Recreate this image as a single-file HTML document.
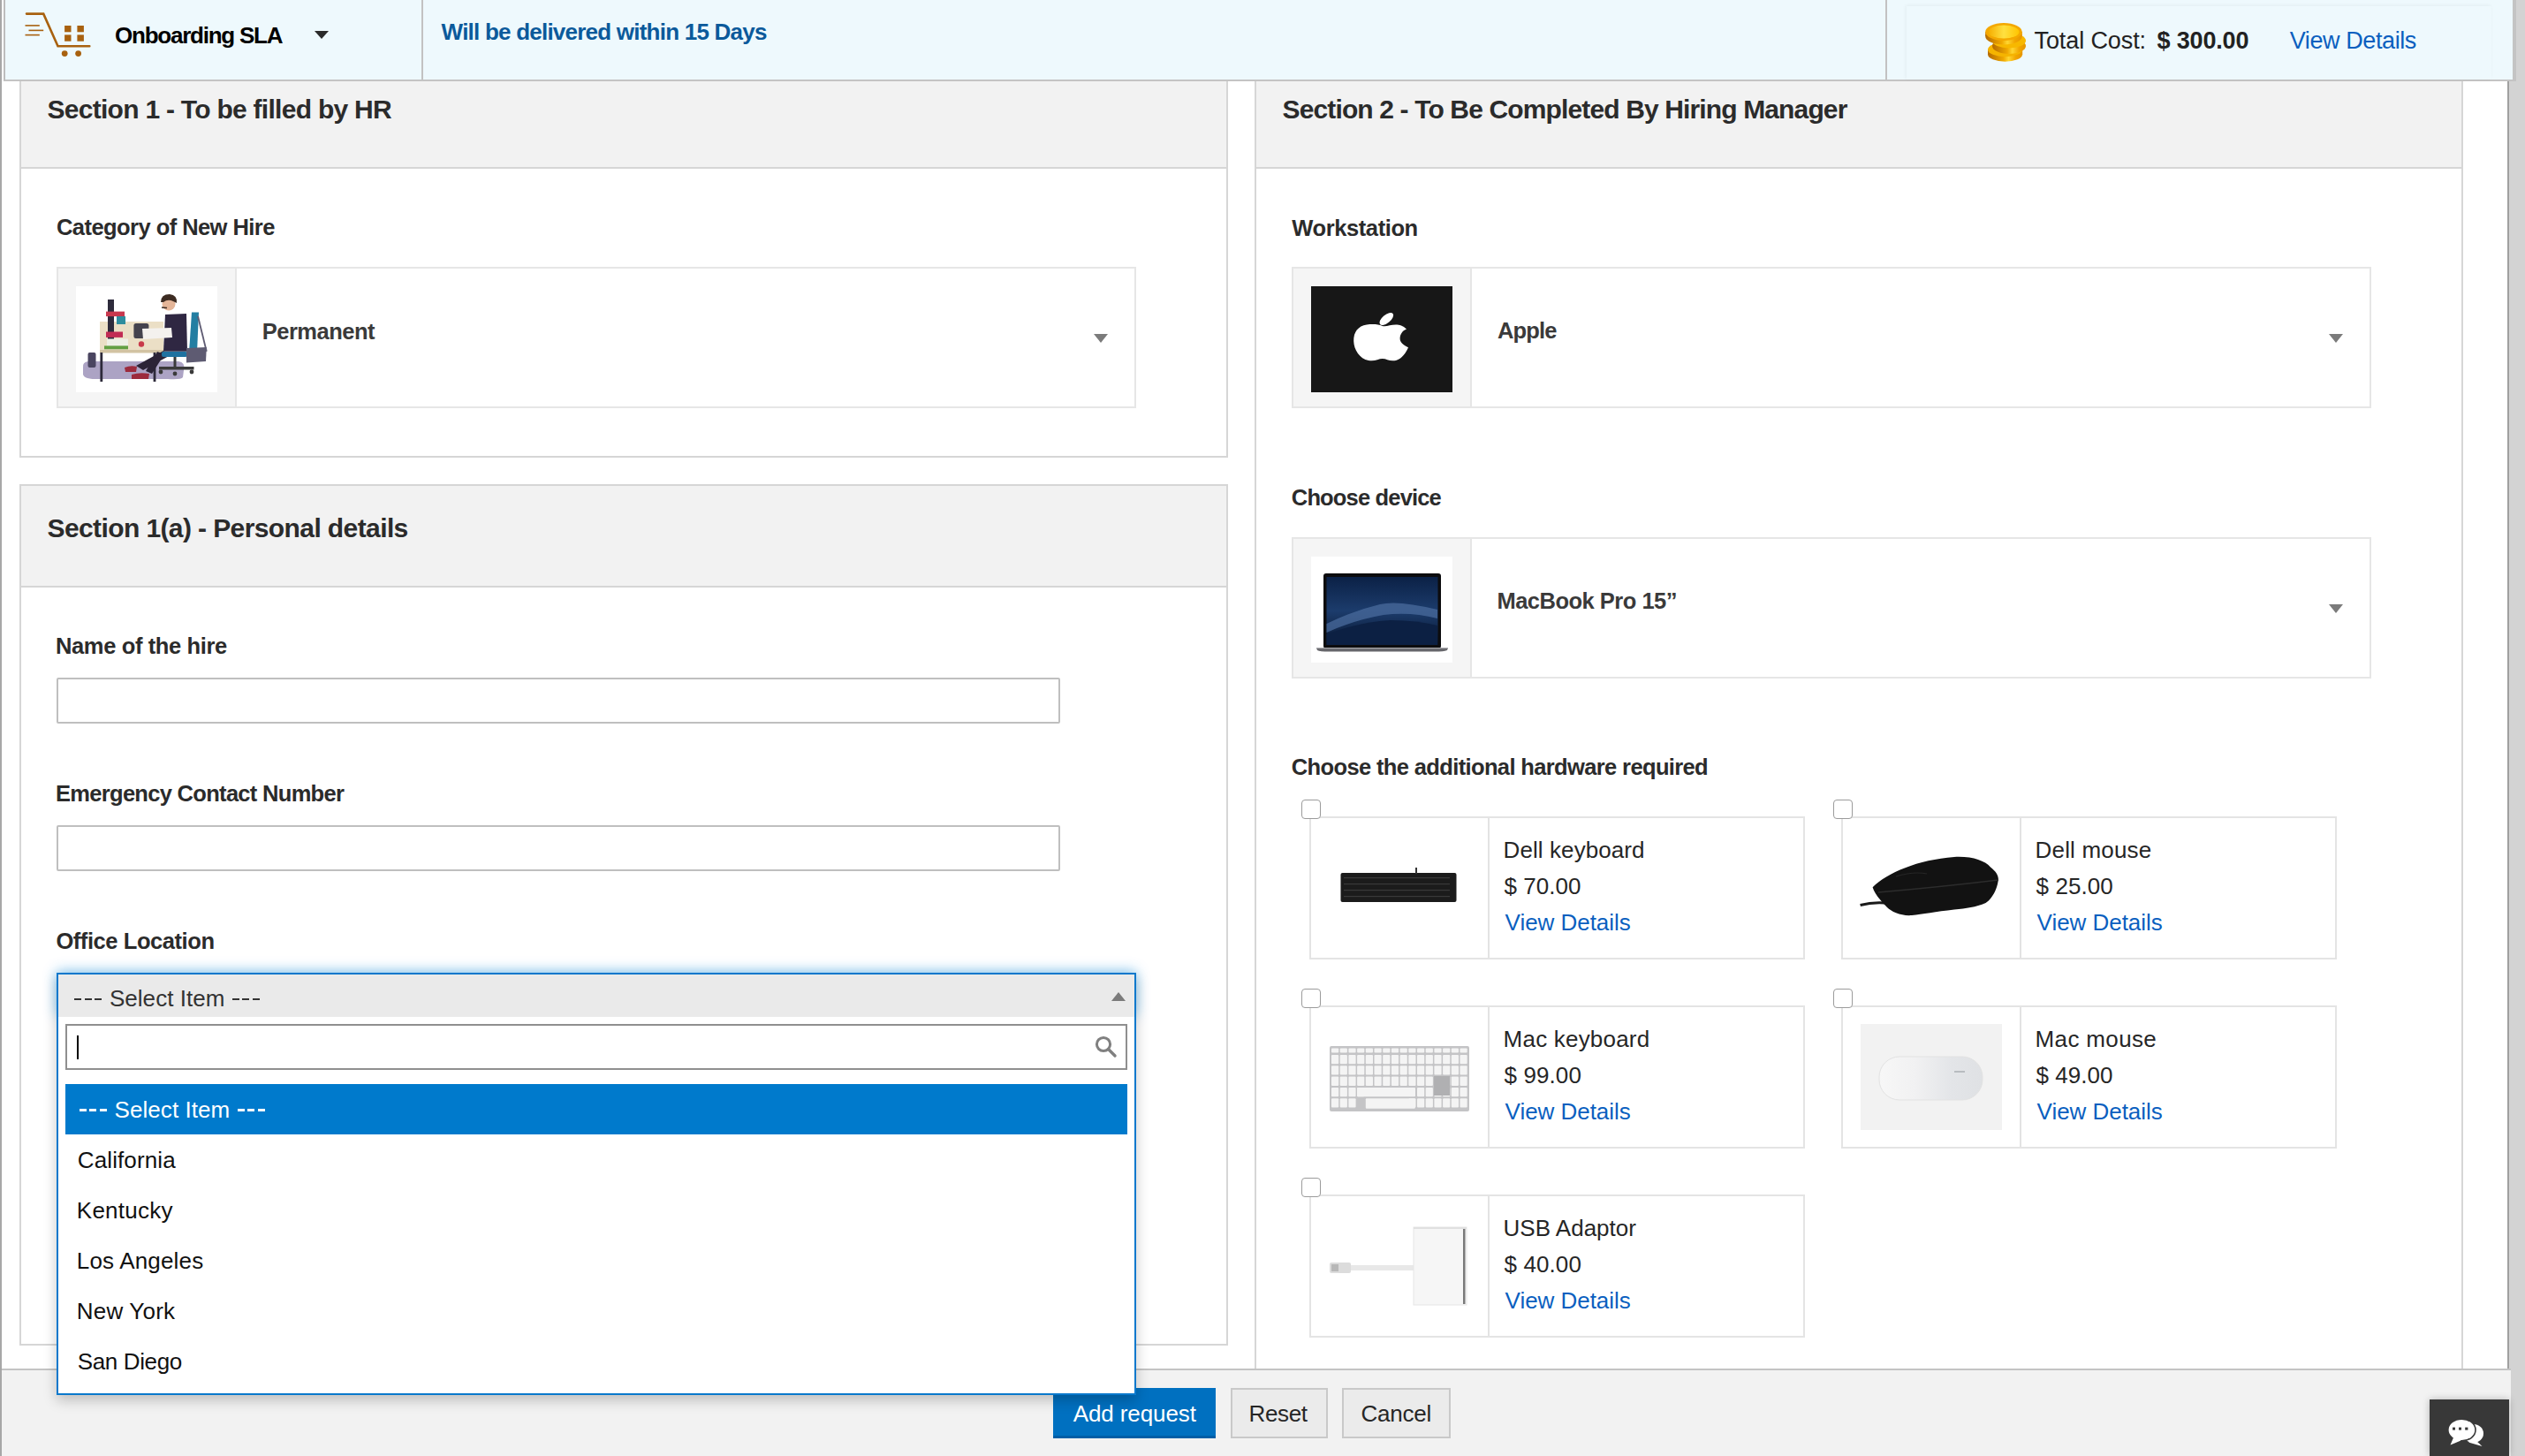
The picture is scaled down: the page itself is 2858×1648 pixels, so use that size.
<!DOCTYPE html>
<html><head><meta charset="utf-8"><title>Onboarding</title>
<style>
html,body{margin:0;padding:0;background:#fff;}
body{width:2858px;height:1648px;position:relative;overflow:hidden;font-family:"Liberation Sans", sans-serif;}
div{box-sizing:content-box;}
</style></head><body>
<div style="position:absolute;left:0px;top:0px;width:2px;height:1648px;background:#a7a7a7"></div>
<div style="position:absolute;left:2838px;top:0px;width:2px;height:1648px;background:#a0a0a0"></div>
<div style="position:absolute;left:2840px;top:0px;width:18px;height:1648px;background:#d3d3d3"></div>
<div style="position:absolute;left:22px;top:74px;width:1364px;height:440px;border:2px solid #d6d6d6;background:#fff"></div>
<div style="position:absolute;left:24px;top:76px;width:1364px;height:113px;background:#f2f2f2;border-bottom:2px solid #d6d6d6"></div>
<div style="position:absolute;left:22px;top:548px;width:1364px;height:971px;border:2px solid #d6d6d6;background:#fff"></div>
<div style="position:absolute;left:24px;top:550px;width:1364px;height:113px;background:#f2f2f2;border-bottom:2px solid #d6d6d6"></div>
<div style="position:absolute;left:1420px;top:74px;width:1364px;height:1496px;border:2px solid #d6d6d6;background:#fff"></div>
<div style="position:absolute;left:1422px;top:76px;width:1364px;height:113px;background:#f2f2f2;border-bottom:2px solid #d6d6d6"></div>
<div style="position:absolute;left:64px;top:302px;width:1218px;height:156px;border:2px solid #e6e6e6;background:#fff"></div>
<div style="position:absolute;left:66px;top:304px;width:200px;height:156px;background:#f5f5f5;border-right:2px solid #e6e6e6"></div>
<div style="position:absolute;left:86px;top:324px;width:160px;height:120px;overflow:hidden"><svg width="160" height="120" viewBox="0 0 160 120">
<rect width="160" height="120" fill="#fff"/>
<path d="M8,92 Q7,86 14,85 L116,85 Q124,86 122,95 L121,103 Q119,106 104,105 L22,105 Q7,105 8,98 Z" fill="#aca3c4"/>
<rect x="13.5" y="75" width="9" height="17" rx="2" fill="#4a4560"/>
<rect x="27" y="40" width="72" height="35" fill="#ebdfc6"/>
<rect x="27" y="72" width="72" height="3.5" fill="#d2c3a3"/>
<rect x="27.4" y="75" width="2.8" height="33" fill="#2d2a3a"/>
<rect x="87.6" y="75" width="2.8" height="33" fill="#2d2a3a"/>
<rect x="36" y="15" width="7" height="46" fill="#2e2b3c"/>
<rect x="34" y="28.6" width="21" height="5.5" fill="#c8384e"/>
<rect x="46" y="34" width="10" height="9" fill="#2f8d9e"/>
<rect x="34" y="51.5" width="19" height="6.4" fill="#c12c54"/>
<rect x="35" y="59.5" width="24" height="9" fill="#eef0e6"/>
<rect x="32" y="67.4" width="27" height="3.9" fill="#63a043"/>
<rect x="65.4" y="42" width="17" height="17" rx="2.5" fill="#45434e"/>
<circle cx="74" cy="65.5" r="3.2" fill="#c83a4a"/>
<path d="M101,32 L125,31 L126,73.7 L99,73.7 Z" fill="#2f2742"/>
<path d="M75,48 L108,47 L109,58 L76,60 Z" fill="#f4f1ee"/>
<path d="M99,73 L105,79 L76,95 L68,90 Z" fill="#2b2336"/>
<path d="M100,77 L86,99 L79,96 L92,74 Z" fill="#2b2336"/>
<path d="M55,92 Q62,89 69,91 L68,97 L56,97 Z" fill="#9c2b3d"/>
<path d="M63,100 Q72,97 83,99 L82,105 L63,105 Z" fill="#9c2b3d"/>
<circle cx="105" cy="20" r="7.5" fill="#e4b598"/>
<path d="M96,18 Q96,9 106,9 Q115,10 114,19 L110,17 Q104,14 99,18 Z" fill="#3d2c22"/>
<path d="M97,24 L103,24.5" stroke="#3d2c22" stroke-width="1.6"/>
<path d="M131,29.4 L139,29.4 L137,75 L128,75 Z" fill="#237ea2"/>
<rect x="97" y="74" width="29" height="6" rx="2" fill="#1f72a0"/>
<rect x="110.5" y="80" width="3" height="11" fill="#3a3a3a"/>
<path d="M94,91 L133.5,91 L133.5,94.5 L94,94.5 Z" fill="#3a3a3a"/>
<circle cx="96" cy="97" r="2.4" fill="#3a3a3a"/><circle cx="112" cy="99" r="2.4" fill="#3a3a3a"/><circle cx="131" cy="97" r="2.4" fill="#3a3a3a"/>
<path d="M125,70 L147.8,69 L147,85 L125,86.4 Z" fill="#5e5b72"/>
<path d="M138,34 L147.8,73.7" stroke="#5e5b72" stroke-width="1.8"/>
</svg></div>
<div style="position:absolute;left:1238px;top:378px;width:0;height:0;border-left:8px solid transparent;border-right:8px solid transparent;border-top:10px solid #7b7b7b"></div>
<div style="position:absolute;left:1462px;top:302px;width:1218px;height:156px;border:2px solid #e6e6e6;background:#fff"></div>
<div style="position:absolute;left:1464px;top:304px;width:200px;height:156px;background:#f5f5f5;border-right:2px solid #e6e6e6"></div>
<div style="position:absolute;left:1484px;top:324px;width:160px;height:120px;overflow:hidden"><svg width="160" height="120" viewBox="0 0 160 120">
<rect width="160" height="120" fill="#171717"/>
<path d="M80.8,45 C76,43 70,42.5 63,43.5 C53,45 48,52 48.2,62 C48.5,72 55,82 65,84 C72,85.5 76,82 80.8,82 C85.5,82 89,85.5 96,84 C103,82 107.5,75 110,69.2 C103,66 100.6,62 100.6,59.4 C100.6,54 104,50 108,48.6 C104,44.5 100,43.5 96,43.5 C90,43.5 85,46 80.8,45 Z" fill="#fff"/>
<ellipse cx="85.3" cy="37" rx="9.5" ry="4.6" transform="rotate(-40 85.3 37)" fill="#fff"/>
</svg></div>
<div style="position:absolute;left:2636px;top:378px;width:0;height:0;border-left:8px solid transparent;border-right:8px solid transparent;border-top:10px solid #7b7b7b"></div>
<div style="position:absolute;left:1462px;top:608px;width:1218px;height:156px;border:2px solid #e6e6e6;background:#fff"></div>
<div style="position:absolute;left:1464px;top:610px;width:200px;height:156px;background:#f5f5f5;border-right:2px solid #e6e6e6"></div>
<div style="position:absolute;left:1484px;top:630px;width:160px;height:120px;overflow:hidden"><svg width="160" height="120" viewBox="0 0 160 120">
<defs><linearGradient id="scr" x1="0" y1="0" x2="0" y2="1"><stop offset="0" stop-color="#0b2146"/><stop offset="0.5" stop-color="#1c3c6c"/><stop offset="1" stop-color="#081630"/></linearGradient></defs>
<rect width="160" height="120" fill="#fff"/>
<rect x="14" y="19" width="133" height="85" rx="3" fill="#0c0c0e"/>
<rect x="17.5" y="23" width="126" height="77" fill="url(#scr)"/>
<path d="M17.5,76 Q45,62 78,54 Q98,49 143,60 L143,70 Q112,62 82,66 Q48,72 17.5,86 Z" fill="#4a6b9c" opacity="0.75"/>
<path d="M17.5,88 Q55,74 90,72 Q120,72 143,78 L143,100 L17.5,100 Z" fill="#0c2043"/>
<path d="M6,103.5 L155,103.5 L154,106 Q150,107.5 140,107.5 L20,107.5 Q10,107.5 7,106 Z" fill="#66666b"/>
<rect x="6" y="103" width="149" height="1.2" fill="#a8a8ac"/>
</svg></div>
<div style="position:absolute;left:2636px;top:684px;width:0;height:0;border-left:8px solid transparent;border-right:8px solid transparent;border-top:10px solid #7b7b7b"></div>
<div style="position:absolute;left:64px;top:767px;width:1132px;height:48px;border:2px solid #bfbfbf;border-radius:2px;background:#fff"></div>
<div style="position:absolute;left:64px;top:934px;width:1132px;height:48px;border:2px solid #bfbfbf;border-radius:2px;background:#fff"></div>
<div style="position:absolute;left:1482px;top:924px;width:557px;height:158px;border:2px solid #e4e4e4;background:#fff"></div>
<div style="position:absolute;left:1684px;top:926px;width:2px;height:158px;background:#e3e3e3"></div>
<div style="position:absolute;left:1473px;top:905px;width:20px;height:20px;border:1.5px solid #9b9b9b;border-radius:4px;background:#fff"></div>
<div style="position:absolute;left:1484px;top:926px;width:200px;height:158px;overflow:hidden"><svg width="200" height="158" viewBox="0 0 200 158"><rect x="33.5" y="62" width="131" height="33" rx="2" fill="#1b1b1b"/>
<rect x="118" y="56" width="2" height="7" fill="#333"/>
<g fill="#3a3a3a"><rect x="37" y="67" width="120" height="1.2"/><rect x="37" y="74" width="120" height="1.2"/><rect x="37" y="81" width="120" height="1.2"/><rect x="37" y="88" width="120" height="1.2"/></g>
</svg></div>
<div style="position:absolute;left:2084px;top:924px;width:557px;height:158px;border:2px solid #e4e4e4;background:#fff"></div>
<div style="position:absolute;left:2286px;top:926px;width:2px;height:158px;background:#e3e3e3"></div>
<div style="position:absolute;left:2075px;top:905px;width:20px;height:20px;border:1.5px solid #9b9b9b;border-radius:4px;background:#fff"></div>
<div style="position:absolute;left:2086px;top:926px;width:200px;height:158px;overflow:hidden"><svg width="200" height="158" viewBox="0 0 200 158">
<path d="M19.6,98.5 Q33,95 47.5,96" stroke="#1a1a1a" stroke-width="3" fill="none"/>
<path d="M33.6,78.2 C50,62 85,47 126,44 C146,43 160,48 167,55.4 C174,61 177,66 175.5,72 C174,82 168,92 161.6,96 C150,101 140,102 126,103.6 C105,106 90,109 78,110 C66,111 55,106 50,101 C44,95 36,86 33.6,78.2 Z" fill="#121212"/>
<path d="M40,84 Q110,78 176,70" stroke="#2c2c2c" stroke-width="1.4" fill="none"/>
<path d="M60,66 Q80,60 95,63" stroke="#262626" stroke-width="1.2" fill="none"/>
</svg></div>
<div style="position:absolute;left:1482px;top:1138px;width:557px;height:158px;border:2px solid #e4e4e4;background:#fff"></div>
<div style="position:absolute;left:1684px;top:1140px;width:2px;height:158px;background:#e3e3e3"></div>
<div style="position:absolute;left:1473px;top:1119px;width:20px;height:20px;border:1.5px solid #9b9b9b;border-radius:4px;background:#fff"></div>
<div style="position:absolute;left:1484px;top:1140px;width:200px;height:158px;overflow:hidden"><svg width="200" height="158" viewBox="0 0 200 158">
<rect x="21" y="44" width="158" height="74" rx="2" fill="#c4c4c6"/>
<g fill="#f4f4f4"><rect x="23.0" y="46.5" width="8.2" height="5" rx="1"/><rect x="32.7" y="46.5" width="8.2" height="5" rx="1"/><rect x="42.4" y="46.5" width="8.2" height="5" rx="1"/><rect x="52.1" y="46.5" width="8.2" height="5" rx="1"/><rect x="61.8" y="46.5" width="8.2" height="5" rx="1"/><rect x="71.5" y="46.5" width="8.2" height="5" rx="1"/><rect x="81.2" y="46.5" width="8.2" height="5" rx="1"/><rect x="90.9" y="46.5" width="8.2" height="5" rx="1"/><rect x="100.6" y="46.5" width="8.2" height="5" rx="1"/><rect x="110.3" y="46.5" width="8.2" height="5" rx="1"/><rect x="120.0" y="46.5" width="8.2" height="5" rx="1"/><rect x="129.7" y="46.5" width="8.2" height="5" rx="1"/><rect x="139.4" y="46.5" width="8.2" height="5" rx="1"/><rect x="149.1" y="46.5" width="8.2" height="5" rx="1"/><rect x="158.8" y="46.5" width="8.2" height="5" rx="1"/><rect x="168.5" y="46.5" width="8.2" height="5" rx="1"/><rect x="23.0" y="54.0" width="8.2" height="10.3" rx="1"/><rect x="32.7" y="54.0" width="8.2" height="10.3" rx="1"/><rect x="42.4" y="54.0" width="8.2" height="10.3" rx="1"/><rect x="52.1" y="54.0" width="8.2" height="10.3" rx="1"/><rect x="61.8" y="54.0" width="8.2" height="10.3" rx="1"/><rect x="71.5" y="54.0" width="8.2" height="10.3" rx="1"/><rect x="81.2" y="54.0" width="8.2" height="10.3" rx="1"/><rect x="90.9" y="54.0" width="8.2" height="10.3" rx="1"/><rect x="100.6" y="54.0" width="8.2" height="10.3" rx="1"/><rect x="110.3" y="54.0" width="8.2" height="10.3" rx="1"/><rect x="120.0" y="54.0" width="8.2" height="10.3" rx="1"/><rect x="129.7" y="54.0" width="8.2" height="10.3" rx="1"/><rect x="139.4" y="54.0" width="8.2" height="10.3" rx="1"/><rect x="149.1" y="54.0" width="8.2" height="10.3" rx="1"/><rect x="158.8" y="54.0" width="8.2" height="10.3" rx="1"/><rect x="168.5" y="54.0" width="8.2" height="10.3" rx="1"/><rect x="23.0" y="66.3" width="8.2" height="10.3" rx="1"/><rect x="32.7" y="66.3" width="8.2" height="10.3" rx="1"/><rect x="42.4" y="66.3" width="8.2" height="10.3" rx="1"/><rect x="52.1" y="66.3" width="8.2" height="10.3" rx="1"/><rect x="61.8" y="66.3" width="8.2" height="10.3" rx="1"/><rect x="71.5" y="66.3" width="8.2" height="10.3" rx="1"/><rect x="81.2" y="66.3" width="8.2" height="10.3" rx="1"/><rect x="90.9" y="66.3" width="8.2" height="10.3" rx="1"/><rect x="100.6" y="66.3" width="8.2" height="10.3" rx="1"/><rect x="110.3" y="66.3" width="8.2" height="10.3" rx="1"/><rect x="120.0" y="66.3" width="8.2" height="10.3" rx="1"/><rect x="129.7" y="66.3" width="8.2" height="10.3" rx="1"/><rect x="139.4" y="66.3" width="8.2" height="10.3" rx="1"/><rect x="149.1" y="66.3" width="8.2" height="10.3" rx="1"/><rect x="158.8" y="66.3" width="8.2" height="10.3" rx="1"/><rect x="168.5" y="66.3" width="8.2" height="10.3" rx="1"/><rect x="23.0" y="78.6" width="8.2" height="10.3" rx="1"/><rect x="32.7" y="78.6" width="8.2" height="10.3" rx="1"/><rect x="42.4" y="78.6" width="8.2" height="10.3" rx="1"/><rect x="52.1" y="78.6" width="8.2" height="10.3" rx="1"/><rect x="61.8" y="78.6" width="8.2" height="10.3" rx="1"/><rect x="71.5" y="78.6" width="8.2" height="10.3" rx="1"/><rect x="81.2" y="78.6" width="8.2" height="10.3" rx="1"/><rect x="90.9" y="78.6" width="8.2" height="10.3" rx="1"/><rect x="100.6" y="78.6" width="8.2" height="10.3" rx="1"/><rect x="110.3" y="78.6" width="8.2" height="10.3" rx="1"/><rect x="120.0" y="78.6" width="8.2" height="10.3" rx="1"/><rect x="129.7" y="78.6" width="8.2" height="10.3" rx="1"/><rect x="139.4" y="78.6" width="8.2" height="10.3" rx="1"/><rect x="149.1" y="78.6" width="8.2" height="10.3" rx="1"/><rect x="158.8" y="78.6" width="8.2" height="10.3" rx="1"/><rect x="168.5" y="78.6" width="8.2" height="10.3" rx="1"/><rect x="23.0" y="90.9" width="8.2" height="10.3" rx="1"/><rect x="32.7" y="90.9" width="8.2" height="10.3" rx="1"/><rect x="42.4" y="90.9" width="8.2" height="10.3" rx="1"/><rect x="52.1" y="90.9" width="8.2" height="10.3" rx="1"/><rect x="120.0" y="90.9" width="8.2" height="10.3" rx="1"/><rect x="129.7" y="90.9" width="8.2" height="10.3" rx="1"/><rect x="139.4" y="90.9" width="8.2" height="10.3" rx="1"/><rect x="149.1" y="90.9" width="8.2" height="10.3" rx="1"/><rect x="158.8" y="90.9" width="8.2" height="10.3" rx="1"/><rect x="168.5" y="90.9" width="8.2" height="10.3" rx="1"/><rect x="23.0" y="103.2" width="8.2" height="10.3" rx="1"/><rect x="32.7" y="103.2" width="8.2" height="10.3" rx="1"/><rect x="42.4" y="103.2" width="8.2" height="10.3" rx="1"/><rect x="110.3" y="103.2" width="8.2" height="10.3" rx="1"/><rect x="120.0" y="103.2" width="8.2" height="10.3" rx="1"/><rect x="129.7" y="103.2" width="8.2" height="10.3" rx="1"/><rect x="139.4" y="103.2" width="8.2" height="10.3" rx="1"/><rect x="149.1" y="103.2" width="8.2" height="10.3" rx="1"/><rect x="158.8" y="103.2" width="8.2" height="10.3" rx="1"/><rect x="168.5" y="103.2" width="8.2" height="10.3" rx="1"/><rect x="61.8" y="103.2" width="56" height="11.5" rx="1"/><rect x="52" y="90.9" width="66" height="10.3" rx="1"/></g>
<rect x="139" y="78" width="18" height="22" fill="#b0b0b2"/>
</svg><rect x="23.0" y="46" width="8" height="11" rx="1"/><rect x="32.8" y="46" width="8" height="11" rx="1"/><rect x="42.6" y="46" width="8" height="11" rx="1"/><rect x="52.4" y="46" width="8" height="11" rx="1"/><rect x="62.2" y="46" width="8" height="11" rx="1"/><rect x="72.0" y="46" width="8" height="11" rx="1"/><rect x="81.8" y="46" width="8" height="11" rx="1"/><rect x="91.6" y="46" width="8" height="11" rx="1"/><rect x="101.4" y="46" width="8" height="11" rx="1"/><rect x="111.2" y="46" width="8" height="11" rx="1"/><rect x="121.0" y="46" width="8" height="11" rx="1"/><rect x="130.8" y="46" width="8" height="11" rx="1"/><rect x="140.6" y="46" width="8" height="11" rx="1"/><rect x="150.4" y="46" width="8" height="11" rx="1"/><rect x="160.2" y="46" width="8" height="11" rx="1"/><rect x="170.0" y="46" width="8" height="11" rx="1"/><rect x="23.0" y="60" width="8" height="11" rx="1"/><rect x="32.8" y="60" width="8" height="11" rx="1"/><rect x="42.6" y="60" width="8" height="11" rx="1"/><rect x="52.4" y="60" width="8" height="11" rx="1"/><rect x="62.2" y="60" width="8" height="11" rx="1"/><rect x="72.0" y="60" width="8" height="11" rx="1"/><rect x="81.8" y="60" width="8" height="11" rx="1"/><rect x="91.6" y="60" width="8" height="11" rx="1"/><rect x="101.4" y="60" width="8" height="11" rx="1"/><rect x="111.2" y="60" width="8" height="11" rx="1"/><rect x="121.0" y="60" width="8" height="11" rx="1"/><rect x="130.8" y="60" width="8" height="11" rx="1"/><rect x="140.6" y="60" width="8" height="11" rx="1"/><rect x="150.4" y="60" width="8" height="11" rx="1"/><rect x="160.2" y="60" width="8" height="11" rx="1"/><rect x="170.0" y="60" width="8" height="11" rx="1"/><rect x="23.0" y="74" width="8" height="11" rx="1"/><rect x="32.8" y="74" width="8" height="11" rx="1"/><rect x="42.6" y="74" width="8" height="11" rx="1"/><rect x="52.4" y="74" width="8" height="11" rx="1"/><rect x="62.2" y="74" width="8" height="11" rx="1"/><rect x="72.0" y="74" width="8" height="11" rx="1"/><rect x="81.8" y="74" width="8" height="11" rx="1"/><rect x="91.6" y="74" width="8" height="11" rx="1"/><rect x="101.4" y="74" width="8" height="11" rx="1"/><rect x="111.2" y="74" width="8" height="11" rx="1"/><rect x="121.0" y="74" width="8" height="11" rx="1"/><rect x="130.8" y="74" width="8" height="11" rx="1"/><rect x="140.6" y="74" width="8" height="11" rx="1"/><rect x="150.4" y="74" width="8" height="11" rx="1"/><rect x="160.2" y="74" width="8" height="11" rx="1"/><rect x="170.0" y="74" width="8" height="11" rx="1"/><rect x="23.0" y="88" width="8" height="11" rx="1"/><rect x="32.8" y="88" width="8" height="11" rx="1"/><rect x="42.6" y="88" width="8" height="11" rx="1"/><rect x="52.4" y="88" width="8" height="11" rx="1"/><rect x="62.2" y="88" width="8" height="11" rx="1"/><rect x="72.0" y="88" width="8" height="11" rx="1"/><rect x="81.8" y="88" width="8" height="11" rx="1"/><rect x="91.6" y="88" width="8" height="11" rx="1"/><rect x="101.4" y="88" width="8" height="11" rx="1"/><rect x="111.2" y="88" width="8" height="11" rx="1"/><rect x="121.0" y="88" width="8" height="11" rx="1"/><rect x="130.8" y="88" width="8" height="11" rx="1"/><rect x="140.6" y="88" width="8" height="11" rx="1"/><rect x="150.4" y="88" width="8" height="11" rx="1"/><rect x="160.2" y="88" width="8" height="11" rx="1"/><rect x="170.0" y="88" width="8" height="11" rx="1"/><rect x="23.0" y="102" width="8" height="11" rx="1"/><rect x="32.8" y="102" width="8" height="11" rx="1"/><rect x="42.6" y="102" width="8" height="11" rx="1"/><rect x="52.4" y="102" width="8" height="11" rx="1"/><rect x="62.2" y="102" width="8" height="11" rx="1"/><rect x="72.0" y="102" width="8" height="11" rx="1"/><rect x="81.8" y="102" width="8" height="11" rx="1"/><rect x="91.6" y="102" width="8" height="11" rx="1"/><rect x="101.4" y="102" width="8" height="11" rx="1"/><rect x="111.2" y="102" width="8" height="11" rx="1"/><rect x="121.0" y="102" width="8" height="11" rx="1"/><rect x="130.8" y="102" width="8" height="11" rx="1"/><rect x="140.6" y="102" width="8" height="11" rx="1"/><rect x="150.4" y="102" width="8" height="11" rx="1"/><rect x="160.2" y="102" width="8" height="11" rx="1"/><rect x="170.0" y="102" width="8" height="11" rx="1"/></g>
</svg></div>
<div style="position:absolute;left:2084px;top:1138px;width:557px;height:158px;border:2px solid #e4e4e4;background:#fff"></div>
<div style="position:absolute;left:2286px;top:1140px;width:2px;height:158px;background:#e3e3e3"></div>
<div style="position:absolute;left:2075px;top:1119px;width:20px;height:20px;border:1.5px solid #9b9b9b;border-radius:4px;background:#fff"></div>
<div style="position:absolute;left:2086px;top:1140px;width:200px;height:158px;overflow:hidden"><svg width="200" height="158" viewBox="0 0 200 158">
<defs><linearGradient id="mm" x1="0" y1="0" x2="1" y2="0"><stop offset="0" stop-color="#f7f7f7"/><stop offset="0.35" stop-color="#f1f1f2"/><stop offset="0.7" stop-color="#e3e5e8"/><stop offset="1" stop-color="#dfe1e4"/></linearGradient></defs>
<rect x="20" y="19" width="160" height="120" fill="#f2f2f2"/>
<rect x="41" y="56" width="117" height="49" rx="23" fill="url(#mm)" stroke="#e2e2e2" stroke-width="1"/>
<path d="M126,73 L138,73" stroke="#b8bcc0" stroke-width="2"/>
</svg></div>
<div style="position:absolute;left:1482px;top:1352px;width:557px;height:158px;border:2px solid #e4e4e4;background:#fff"></div>
<div style="position:absolute;left:1684px;top:1354px;width:2px;height:158px;background:#e3e3e3"></div>
<div style="position:absolute;left:1473px;top:1333px;width:20px;height:20px;border:1.5px solid #9b9b9b;border-radius:4px;background:#fff"></div>
<div style="position:absolute;left:1484px;top:1354px;width:200px;height:158px;overflow:hidden"><svg width="200" height="158" viewBox="0 0 200 158">
<rect x="21" y="75" width="24" height="12" rx="2" fill="#dcdcdc"/>
<rect x="23" y="77" width="8" height="8" fill="#b8b8b8"/>
<rect x="45" y="78" width="71" height="6" fill="#e8e8e8"/>
<rect x="116" y="35" width="60" height="88" fill="#f6f6f6" stroke="#e6e6e6" stroke-width="1"/>
<rect x="172" y="36" width="2.5" height="86" fill="#7a7a7a"/>
<rect x="116" y="35" width="60" height="2" fill="#e0e0e0"/>
</svg></div>
<div style="position:absolute;left:2px;top:1549px;width:2840px;height:99px;background:#f2f2f2;border-top:2px solid #c4c4c4"></div>
<div style="position:absolute;left:1192px;top:1571px;width:184px;height:54px;background:#0070c0;border-bottom:3px solid #005ea6"></div>
<div style="position:absolute;left:1393px;top:1571px;width:106px;height:53px;background:#ebebeb;border:2px solid #c9c9c9"></div>
<div style="position:absolute;left:1519px;top:1571px;width:119px;height:53px;background:#ebebeb;border:2px solid #c9c9c9"></div>
<div style="position:absolute;left:2750px;top:1584px;width:90px;height:64px;background:#383838;box-shadow:0 0 8px rgba(0,0,0,0.25)">
<svg width="90" height="64" viewBox="0 0 90 64" style="position:absolute;left:0;top:0">
<ellipse cx="49.5" cy="38.5" rx="11.5" ry="10.5" fill="#fff"/>
<path d="M52,46 L59.5,53 L44,48.5 Z" fill="#fff"/>
<ellipse cx="36.4" cy="34.5" rx="15.6" ry="12.4" fill="#fff" stroke="#383838" stroke-width="1.6"/>
<path d="M27.5,42 L23.5,51.5 L35.5,46.6 Z" fill="#fff"/>
<rect x="26" y="31.6" width="3" height="3" fill="#383838"/><rect x="33" y="31.6" width="3" height="3" fill="#383838"/><rect x="40.2" y="31.6" width="3.2" height="3" fill="#383838"/>
</svg></div>
<div style="position:absolute;left:4px;top:0;width:2840px;height:90px;background:#eef9fd;border-left:2px solid #bdbdbd;border-right:4px solid #c4c4c4;border-bottom:2px solid #c4c4c4;box-sizing:content-box;width:2838px"></div>
<div style="position:absolute;left:477px;top:0px;width:2px;height:90px;background:#c2c2c2"></div>
<div style="position:absolute;left:2134px;top:0px;width:2px;height:90px;background:#c2c2c2"></div>
<div style="position:absolute;left:2158px;top:7px;width:662px;height:83px;box-shadow:-1px -1px 4px rgba(0,0,0,0.05);background:#eef9fd"></div>
<svg style="position:absolute;left:0;top:0" width="120" height="80" viewBox="0 0 120 80">
<g stroke="#a8610f" fill="none" stroke-linecap="round" stroke-linejoin="miter">
<path d="M30,15.6 L49.2,15.6 L65.5,52.3 L101.3,52.3" stroke-width="2.6"/>
<path d="M28.5,28.9 L44.8,28.9" stroke-width="1.6" stroke-linecap="butt"/>
<path d="M32.5,34.4 L49.2,34.4" stroke-width="1.6" stroke-linecap="butt"/>
<path d="M28.5,39.6 L44.8,39.6" stroke-width="1.6" stroke-linecap="butt"/>
</g>
<g fill="#a8610f">
<rect x="73.1" y="29" width="7.4" height="7.3"/><rect x="87.4" y="29" width="7.5" height="7.3"/>
<rect x="73.1" y="39.4" width="7.4" height="7.3"/><rect x="87.4" y="39.4" width="7.5" height="7.3"/>
<circle cx="73.2" cy="60.6" r="3.4"/><circle cx="88.6" cy="60.6" r="3.4"/>
</g></svg>
<div style="position:absolute;left:356px;top:34.5px;width:0;height:0;border-left:8px solid transparent;border-right:8px solid transparent;border-top:9px solid #2a2a2a"></div>
<svg style="position:absolute;left:2240px;top:20px" width="60" height="56" viewBox="2240 20 60 56">
<defs>
<linearGradient id="cs" x1="0" y1="0" x2="1" y2="0"><stop offset="0" stop-color="#b46a00"/><stop offset="0.45" stop-color="#f0a800"/><stop offset="0.6" stop-color="#ffd630"/><stop offset="0.8" stop-color="#f2a600"/><stop offset="1" stop-color="#e69500"/></linearGradient>
<linearGradient id="ct" x1="0" y1="0" x2="1" y2="0"><stop offset="0" stop-color="#f5ad00"/><stop offset="0.5" stop-color="#ffe040"/><stop offset="1" stop-color="#ffc400"/></linearGradient>
</defs>
<ellipse cx="2269.6" cy="61.5" rx="19.6" ry="8.2" fill="url(#cs)"/>
<path d="M2250,56 L2289.2,56 L2289.2,61.5 L2250,61.5 Z" fill="url(#cs)"/>
<ellipse cx="2269.6" cy="56" rx="19.6" ry="8.2" fill="#f5b400"/>
<ellipse cx="2274" cy="52" rx="19" ry="9" fill="url(#cs)"/>
<ellipse cx="2274" cy="46" rx="19" ry="8.5" fill="#f7b800"/>
<ellipse cx="2268" cy="41" rx="20.8" ry="9.5" fill="url(#cs)"/>
<path d="M2247.2,36 L2288.8,36 L2288.8,41 L2247.2,41 Z" fill="url(#cs)"/>
<ellipse cx="2268" cy="36" rx="20.8" ry="9.9" fill="#f4a800"/>
<ellipse cx="2268" cy="36" rx="17.5" ry="7.6" fill="url(#ct)"/>
</svg>
<div style="position:absolute;left:64px;top:1101px;width:1222px;height:478px;box-shadow:0 6px 14px rgba(0,0,0,0.22)"></div>
<div style="position:absolute;left:64px;top:1101px;width:1222px;height:50px;box-shadow:0 -2px 14px rgba(0,140,230,0.45)"></div>
<div style="position:absolute;left:64px;top:1101px;width:1218px;height:474px;border:2px solid #0a78cc;background:#fff"></div>
<div style="position:absolute;left:66px;top:1103px;width:1218px;height:48px;background:#eaeaea"></div>
<div style="position:absolute;left:1258px;top:1123px;width:0;height:0;border-left:8px solid transparent;border-right:8px solid transparent;border-bottom:10px solid #7b7b7b"></div>
<div style="position:absolute;left:74px;top:1159px;width:1198px;height:48px;border:2px solid #8f8f8f;background:#fff"></div>
<div style="position:absolute;left:87px;top:1172px;width:2px;height:27px;background:#000"></div>
<svg style="position:absolute;left:1236px;top:1170px" width="32" height="32" viewBox="0 0 32 32">
<circle cx="13" cy="12" r="7.6" stroke="#808080" stroke-width="3" fill="none"/>
<path d="M18.5,17.5 L26,25" stroke="#808080" stroke-width="3.4" stroke-linecap="round"/>
</svg>
<div style="position:absolute;left:74px;top:1227px;width:1202px;height:57px;background:#007acc"></div>
<div style="position:absolute;left:83.9px;top:1129.6px;width:8px;height:2.6px;background:#333"></div>
<div style="position:absolute;left:95.5px;top:1129.6px;width:8px;height:2.6px;background:#333"></div>
<div style="position:absolute;left:107.0px;top:1129.6px;width:8px;height:2.6px;background:#333"></div>
<div style="position:absolute;left:263.0px;top:1129.6px;width:8px;height:2.6px;background:#333"></div>
<div style="position:absolute;left:274.4px;top:1129.6px;width:8px;height:2.6px;background:#333"></div>
<div style="position:absolute;left:286.0px;top:1129.6px;width:8px;height:2.6px;background:#333"></div>
<div style="position:absolute;left:89.6px;top:1255.4px;width:8px;height:2.6px;background:#fff"></div>
<div style="position:absolute;left:101.2px;top:1255.4px;width:8px;height:2.6px;background:#fff"></div>
<div style="position:absolute;left:112.7px;top:1255.4px;width:8px;height:2.6px;background:#fff"></div>
<div style="position:absolute;left:268.7px;top:1255.4px;width:8px;height:2.6px;background:#fff"></div>
<div style="position:absolute;left:280.1px;top:1255.4px;width:8px;height:2.6px;background:#fff"></div>
<div style="position:absolute;left:291.7px;top:1255.4px;width:8px;height:2.6px;background:#fff"></div>
<div style="position:absolute;left:130.00px;top:26.99px;font-size:26px;font-weight:700;color:#000;letter-spacing:-1.231px;line-height:1;white-space:nowrap">Onboarding SLA</div>
<div style="position:absolute;left:499.60px;top:23.19px;font-size:26px;font-weight:700;color:#0b5a9b;letter-spacing:-0.774px;line-height:1;white-space:nowrap">Will be delivered within 15 Days</div>
<div style="position:absolute;left:2302.50px;top:32.64px;font-size:27px;font-weight:400;color:#222;letter-spacing:-0.100px;line-height:1;white-space:nowrap">Total Cost:</div>
<div style="position:absolute;left:2441.60px;top:32.64px;font-size:27px;font-weight:700;color:#222;letter-spacing:-0.186px;line-height:1;white-space:nowrap">$ 300.00</div>
<div style="position:absolute;left:2591.70px;top:32.64px;font-size:27px;font-weight:400;color:#0a5fbf;letter-spacing:-0.400px;line-height:1;white-space:nowrap">View Details</div>
<div style="position:absolute;left:53.50px;top:108.61px;font-size:30px;font-weight:700;color:#2b2b2b;letter-spacing:-0.724px;line-height:1;white-space:nowrap">Section 1 - To be filled by HR</div>
<div style="position:absolute;left:64.00px;top:245.01px;font-size:25.5px;font-weight:700;color:#2b2b2b;letter-spacing:-0.553px;line-height:1;white-space:nowrap">Category of New Hire</div>
<div style="position:absolute;left:296.70px;top:362.71px;font-size:25.5px;font-weight:700;color:#3a3a3a;letter-spacing:-0.500px;line-height:1;white-space:nowrap">Permanent</div>
<div style="position:absolute;left:53.50px;top:582.90px;font-size:30px;font-weight:700;color:#2b2b2b;letter-spacing:-0.600px;line-height:1;white-space:nowrap">Section 1(a) - Personal details</div>
<div style="position:absolute;left:63.00px;top:719.41px;font-size:25.5px;font-weight:700;color:#2b2b2b;letter-spacing:-0.373px;line-height:1;white-space:nowrap">Name of the hire</div>
<div style="position:absolute;left:63.00px;top:886.31px;font-size:25.5px;font-weight:700;color:#2b2b2b;letter-spacing:-0.696px;line-height:1;white-space:nowrap">Emergency Contact Number</div>
<div style="position:absolute;left:63.40px;top:1053.41px;font-size:25.5px;font-weight:700;color:#2b2b2b;letter-spacing:-0.429px;line-height:1;white-space:nowrap">Office Location</div>
<div style="position:absolute;left:123.90px;top:1117.19px;font-size:26px;font-weight:400;color:#333;letter-spacing:0.050px;line-height:1;white-space:nowrap">Select Item</div>
<div style="position:absolute;left:129.60px;top:1242.99px;font-size:26px;font-weight:400;color:#fff;letter-spacing:0.050px;line-height:1;white-space:nowrap">Select Item</div>
<div style="position:absolute;left:87.80px;top:1299.79px;font-size:26px;font-weight:400;color:#111;letter-spacing:0.111px;line-height:1;white-space:nowrap">California</div>
<div style="position:absolute;left:86.80px;top:1356.89px;font-size:26px;font-weight:400;color:#111;letter-spacing:0.257px;line-height:1;white-space:nowrap">Kentucky</div>
<div style="position:absolute;left:86.80px;top:1413.99px;font-size:26px;font-weight:400;color:#111;letter-spacing:0.170px;line-height:1;white-space:nowrap">Los Angeles</div>
<div style="position:absolute;left:86.80px;top:1470.69px;font-size:26px;font-weight:400;color:#111;letter-spacing:0.200px;line-height:1;white-space:nowrap">New York</div>
<div style="position:absolute;left:87.80px;top:1528.29px;font-size:26px;font-weight:400;color:#111;letter-spacing:-0.375px;line-height:1;white-space:nowrap">San Diego</div>
<div style="position:absolute;left:1214.70px;top:1586.99px;font-size:26px;font-weight:400;color:#fff;letter-spacing:-0.100px;line-height:1;white-space:nowrap">Add request</div>
<div style="position:absolute;left:1413.60px;top:1586.99px;font-size:26px;font-weight:400;color:#262626;letter-spacing:-0.400px;line-height:1;white-space:nowrap">Reset</div>
<div style="position:absolute;left:1540.40px;top:1586.99px;font-size:26px;font-weight:400;color:#262626;letter-spacing:-0.200px;line-height:1;white-space:nowrap">Cancel</div>
<div style="position:absolute;left:1451.50px;top:108.80px;font-size:30px;font-weight:700;color:#2b2b2b;letter-spacing:-0.864px;line-height:1;white-space:nowrap">Section 2 - To Be Completed By Hiring Manager</div>
<div style="position:absolute;left:1462.30px;top:246.01px;font-size:25.5px;font-weight:700;color:#2b2b2b;letter-spacing:-0.400px;line-height:1;white-space:nowrap">Workstation</div>
<div style="position:absolute;left:1695.10px;top:362.11px;font-size:25.5px;font-weight:700;color:#3a3a3a;letter-spacing:-0.900px;line-height:1;white-space:nowrap">Apple</div>
<div style="position:absolute;left:1461.80px;top:550.91px;font-size:25.5px;font-weight:700;color:#2b2b2b;letter-spacing:-0.833px;line-height:1;white-space:nowrap">Choose device</div>
<div style="position:absolute;left:1694.40px;top:668.41px;font-size:25.5px;font-weight:700;color:#3a3a3a;letter-spacing:-0.500px;line-height:1;white-space:nowrap">MacBook Pro 15”</div>
<div style="position:absolute;left:1461.80px;top:855.91px;font-size:25.5px;font-weight:700;color:#2b2b2b;letter-spacing:-0.632px;line-height:1;white-space:nowrap">Choose the additional hardware required</div>
<div style="position:absolute;left:1701.60px;top:948.59px;font-size:26px;font-weight:400;color:#262626;letter-spacing:0.083px;line-height:1;white-space:nowrap">Dell keyboard</div>
<div style="position:absolute;left:1702.60px;top:990.09px;font-size:26px;font-weight:400;color:#262626;letter-spacing:0.000px;line-height:1;white-space:nowrap">$ 70.00</div>
<div style="position:absolute;left:1703.60px;top:1031.19px;font-size:26px;font-weight:400;color:#0a5fbf;letter-spacing:-0.036px;line-height:1;white-space:nowrap">View Details</div>
<div style="position:absolute;left:2303.60px;top:948.59px;font-size:26px;font-weight:400;color:#262626;letter-spacing:0.167px;line-height:1;white-space:nowrap">Dell mouse</div>
<div style="position:absolute;left:2304.60px;top:990.09px;font-size:26px;font-weight:400;color:#262626;letter-spacing:0.067px;line-height:1;white-space:nowrap">$ 25.00</div>
<div style="position:absolute;left:2305.60px;top:1031.19px;font-size:26px;font-weight:400;color:#0a5fbf;letter-spacing:-0.036px;line-height:1;white-space:nowrap">View Details</div>
<div style="position:absolute;left:1701.60px;top:1162.59px;font-size:26px;font-weight:400;color:#262626;letter-spacing:0.209px;line-height:1;white-space:nowrap">Mac keyboard</div>
<div style="position:absolute;left:1702.60px;top:1204.09px;font-size:26px;font-weight:400;color:#262626;letter-spacing:0.083px;line-height:1;white-space:nowrap">$ 99.00</div>
<div style="position:absolute;left:1703.60px;top:1245.19px;font-size:26px;font-weight:400;color:#0a5fbf;letter-spacing:-0.036px;line-height:1;white-space:nowrap">View Details</div>
<div style="position:absolute;left:2303.60px;top:1162.59px;font-size:26px;font-weight:400;color:#262626;letter-spacing:0.350px;line-height:1;white-space:nowrap">Mac mouse</div>
<div style="position:absolute;left:2304.60px;top:1204.09px;font-size:26px;font-weight:400;color:#262626;letter-spacing:0.000px;line-height:1;white-space:nowrap">$ 49.00</div>
<div style="position:absolute;left:2305.60px;top:1245.19px;font-size:26px;font-weight:400;color:#0a5fbf;letter-spacing:-0.036px;line-height:1;white-space:nowrap">View Details</div>
<div style="position:absolute;left:1701.60px;top:1376.59px;font-size:26px;font-weight:400;color:#262626;letter-spacing:0.000px;line-height:1;white-space:nowrap">USB Adaptor</div>
<div style="position:absolute;left:1702.60px;top:1418.09px;font-size:26px;font-weight:400;color:#262626;letter-spacing:0.083px;line-height:1;white-space:nowrap">$ 40.00</div>
<div style="position:absolute;left:1703.60px;top:1459.19px;font-size:26px;font-weight:400;color:#0a5fbf;letter-spacing:-0.036px;line-height:1;white-space:nowrap">View Details</div>
</body></html>
